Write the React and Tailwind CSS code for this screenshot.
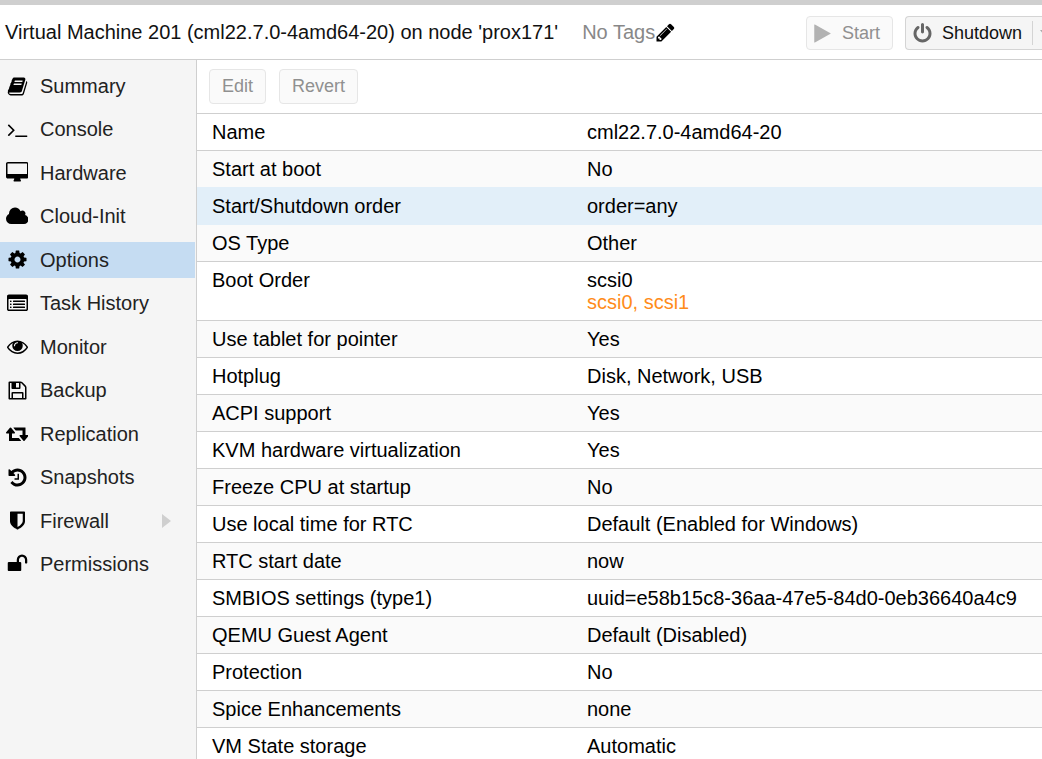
// ============================================================
// Virtual machine view: header, side navigation and options grid
// ============================================================

import { useState } from "react";

// Icon outlines, drawn on a 1792 unit grid. Each has its own x origin and width.
const ICONS = {
  book: {
    d: "M1703 478q40 57 18 129l-275 906q-19 64-76.5 107.5t-122.5 43.5h-923q-77 0-148.5-53.5t-99.5-131.5q-24-67-2-127 0-4 3-27t4-37q1-8-3-21.5t-3-19.5q2-11 8-21t16.5-23.5 16.5-23.5q23-38 45-91.5t30-91.5q3-10 .5-30t-.5-28q3-11 17-28t17-23q21-36 42-92t25-90q1-9-2.5-32t.5-28q4-13 22-30.5t22-22.5q19-26 42.5-84.5t27.5-96.5q1-8-3-25.5t-2-26.5q2-8 9-18t18-23 17-21q8-12 16.5-30.5t15-35 16-36 19.5-32 26.5-23.5 36-11.5 47.5 5.5l-1 3q38-9 51-9h761q74 0 114 56t18 130l-274 906q-36 119-71.5 153.5t-128.5 34.5h-869q-27 0-38 15-11 16-1 43 24 70 144 70h923q29 0 56-15.5t35-41.5l300-987q7-22 5-57 38 15 59 43zm-1064 2q-4 13 2 22.5t20 9.5h608q13 0 25.5-9.5t16.5-22.5l21-64q4-13-2-22.5t-20-9.5h-608q-13 0-25.5 9.5t-16.5 22.5zm-83 256q-4 13 2 22.5t20 9.5h608q13 0 25.5-9.5t16.5-22.5l21-64q4-13-2-22.5t-20-9.5h-608q-13 0-25.5 9.5t-16.5 22.5z",
  },
  terminal: {
    d: "M649 983l-466 466q-10 10-23 10t-23-10l-50-50q-10-10-10-23t10-23l393-393-393-393q-10-10-10-23t10-23l50-50q10-10 23-10t23 10l466 466q10 10 10 23t-10 23zm1079 457v64q0 14-9 23t-23 9h-960q-14 0-23-9t-9-23v-64q0-14 9-23t23-9h960q14 0 23 9t9 23z",
  },
  desktop: {
    x: -64,
    w: 1920,
    d: "M1728 992v-832q0-13-9.5-22.5t-22.5-9.5h-1600q-13 0-22.5 9.5t-9.5 22.5v832q0 13 9.5 22.5t22.5 9.5h1600q13 0 22.5-9.5t9.5-22.5zm128-832v1088q0 66-47 113t-113 47h-544q0 37 16 77.5t32 71 16 43.5q0 26-19 45t-45 19h-512q-26 0-45-19t-19-45q0-14 16-44t32-70 16-78h-544q-66 0-113-47t-47-113v-1088q0-66 47-113t113-47h1600q66 0 113 47t47 113z",
  },
  cloud: {
    x: 64,
    w: 1920,
    d: "M1984 1152q0 159-112.5 271.5t-271.5 112.5h-1088q-185 0-316.5-131.5t-131.5-316.5q0-132 71-241.5t187-163.5q-2-28-2-43 0-212 150-362t362-150q158 0 286.5 88t187.5 230q70-62 166-62 106 0 181 75t75 181q0 75-41 138 129 30 213 134.5t84 239.5z",
  },
  cog: {
    d: "M1152 896q0-106-75-181t-181-75-181 75-75 181 75 181 181 75 181-75 75-181zm512-109v222q0 12-8 23t-20 13l-185 28q-19 54-39 91 35 50 107 138 10 12 10 25t-9 23q-27 37-99 108t-94 71q-12 0-26-9l-138-108q-44 23-91 38-16 136-29 186-7 28-36 28h-222q-14 0-24.5-8.5t-11.5-21.5l-28-184q-49-16-90-37l-141 107q-10 9-25 9-14 0-25-11-126-114-165-168-7-10-7-23 0-12 8-23 15-21 51-66.5t54-70.5q-27-50-41-99l-183-27q-13-2-21-12.5t-8-23.5v-222q0-12 8-23t19-13l186-28q14-46 39-92-40-57-107-138-10-12-10-24 0-10 9-23 26-36 98.5-107.5t94.5-71.5q13 0 26 10l138 107q44-23 91-38 16-136 29-186 7-28 36-28h222q14 0 24.5 8.5t11.5 21.5l28 184q49 16 90 37l142-107q9-9 24-9 13 0 25 10 129 119 165 170 7 8 7 22 0 12-8 23-15 21-51 66.5t-54 70.5q26 50 41 98l183 28q13 2 21 12.5t8 23.5z",
  },
  list: {
    d: "M160 128h1472q66 0 113 47t47 113v1088q0 66-47 113t-113 47h-1472q-66 0-113-47t-47-113v-1088q0-66 47-113t113-47zM160 512q-32 0-32 32v832q0 32 32 32h1472q32 0 32-32v-832q0-32-32-32zM288 640h64q32 0 32 32v64q0 32-32 32h-64q-32 0-32-32v-64q0-32 32-32zM288 896h64q32 0 32 32v64q0 32-32 32h-64q-32 0-32-32v-64q0-32 32-32zM288 1152h64q32 0 32 32v64q0 32-32 32h-64q-32 0-32-32v-64q0-32 32-32zM544 640h960q32 0 32 32v64q0 32-32 32h-960q-32 0-32-32v-64q0-32 32-32zM544 896h960q32 0 32 32v64q0 32-32 32h-960q-32 0-32-32v-64q0-32 32-32zM544 1152h960q32 0 32 32v64q0 32-32 32h-960q-32 0-32-32v-64q0-32 32-32z",
  },
  eye: {
    d: "M1664 960q-152-236-381-353 61 104 61 225 0 185-131.5 316.5t-316.5 131.5-316.5-131.5-131.5-316.5q0-121 61-225-229 117-381 353 133 205 333.5 326.5t434.5 121.5 434.5-121.5 333.5-326.5zm-720-384q0-20-14-34t-34-14q-125 0-214.5 89.5t-89.5 214.5q0 20 14 34t34 14 34-14 14-34q0-86 61-147t147-61q20 0 34-14t14-34zm848 384q0 34-20 69-140 230-376.5 368.5t-499.5 138.5-499.5-139-376.5-368q-20-35-20-69t20-69q140-229 376.5-368t499.5-139 499.5 139 376.5 368q20 35 20 69z",
  },
  floppy: {
    d: "M512 1536h768v-384h-768v384zm896 0h128v-896q0-14-10-38.5t-20-34.5l-281-281q-10-10-34-20t-39-10v416q0 40-28 68t-68 28h-576q-40 0-68-28t-28-68v-416h-128v1280h128v-416q0-40 28-68t68-28h832q40 0 68 28t28 68v416zm-384-928v-320q0-13-9.5-22.5t-22.5-9.5h-192q-13 0-22.5 9.5t-9.5 22.5v320q0 13 9.5 22.5t22.5 9.5h192q13 0 22.5-9.5t9.5-22.5zm640 32v928q0 40-28 68t-68 28h-1344q-40 0-68-28t-28-68v-1344q0-40 28-68t68-28h928q40 0 88 20t76 48l280 280q28 28 48 76t20 88z",
  },
  retweet: {
    x: -64,
    w: 1920,
    d: "M1216 1504q0 13-9.5 22.5t-22.5 9.5h-960q-8 0-13.5-2t-9-7-5.5-8-3-11.5-1-11.5v-600h-192q-26 0-45-19t-19-45q0-24 15-41l320-384q19-22 49-22t49 22l320 384q15 17 15 41 0 26-19 45t-45 19h-192v384h576q16 0 25 11l160 192q7 10 7 21zm640-416q0 24-15 41l-320 384q-20 23-49 23t-49-23l-320-384q-15-17-15-41 0-26 19-45t45-19h192v-384h-576q-16 0-25-12l-160-192q-7-9-7-20 0-13 9.5-22.5t22.5-9.5h960q8 0 13.5 2t9 7 5.5 8 3 11.5 1 11.5v600h192q26 0 45 19t19 45z",
  },
  history: {
    d: "M1664 896q0 156-61 298t-164 245-245 164-298 61q-172 0-327-72.5t-264-204.5q-7-10-6.5-22.5t8.5-20.5l137-138q10-9 25-9 16 2 23 12 73 95 179 147t225 52q104 0 198.5-40.5t163.5-109.5 109.5-163.5 40.5-198.5-40.5-198.5-109.5-163.5-163.5-109.5-198.5-40.5q-98 0-188 35.5t-160 101.5l137 138q31 30 14 69-17 40-59 40h-448q-26 0-45-19t-19-45v-448q0-42 40-59 39-17 69 14l130 129q107-101 244.5-156.5t284.5-55.5q156 0 298 61t245 164 164 245 61 298zm-640-288v448q0 14-9 23t-23 9h-320q-14 0-23-9t-9-23v-64q0-14 9-23t23-9h224v-352q0-14 9-23t23-9h64q14 0 23 9t9 23z",
  },
  shield: {
    x: 64,
    d: "M1408 960v-640h-448v1137q119-63 213-137 235-184 235-360zm192-768v768q0 86-33.5 170.5t-83 150-118 127.5-126.5 103-121 77.5-89.5 49.5-42.5 20q-12 6-26 6t-26-6q-16-7-42.5-20t-89.5-49.5-121-77.5-126.5-103-118-127.5-83-150-33.5-170.5v-768q0-26 19-45t45-19h1152q26 0 45 19t19 45z",
  },
  unlock: {
    d: "M1728 576v256q0 26-19 45t-45 19h-64q-26 0-45-19t-19-45v-256q0-106-75-181t-181-75-181 75-75 181v192h96q40 0 68 28t28 68v576q0 40-28 68t-68 28h-960q-40 0-68-28t-28-68v-576q0-40 28-68t68-28h672v-192q0-185 131.5-316.5t316.5-131.5 316.5 131.5 131.5 316.5z",
  },
  power: {
    d: "M1664 896q0 156-61 298t-164 245-245 164-298 61-298-61-245-164-164-245-61-298q0-182 80.5-343t226.5-270q43-32 95.5-25t83.5 50q32 42 24.5 94.5t-49.5 84.5q-98 74-151.5 181t-53.5 228q0 104 40.5 198.5t109.5 163.5 163.5 109.5 198.5 40.5 198.5-40.5 163.5-109.5 109.5-163.5 40.5-198.5q0-121-53.5-228t-151.5-181q-42-32-49.5-84.5t24.5-94.5q31-43 84-50t95 25q146 109 226.5 270t80.5 343zm-640-768v640q0 52-38 90t-90 38-90-38-38-90v-640q0-52 38-90t90-38 90 38 38 90z",
  },
  play: {
    d: "M1576 927l-1328 738q-23 13-39.5 3t-16.5-36v-1472q0-26 16.5-36t39.5 3l1328 738q23 13 23 31t-23 31z",
  },
  pencil: {
    d: "M491 1536l91-91-235-235-91 91v107h128v128h107zm523-928q0-22-22-22-10 0-17 7l-542 542q-7 7-7 17 0 22 22 22 10 0 17-7l542-542q7-7 7-17zm-54-192l416 416-832 832h-416v-416zm683 96q0 53-37 90l-166 166-416-416 166-165q36-38 90-38 53 0 91 38l235 234q37 39 37 91z",
  },
};

const NAV = [
  ["Summary", "book"],
  ["Console", "terminal"],
  ["Hardware", "desktop"],
  ["Cloud-Init", "cloud"],
  ["Options", "cog"],
  ["Task History", "list"],
  ["Monitor", "eye"],
  ["Backup", "floppy"],
  ["Replication", "retweet"],
  ["Snapshots", "history"],
  ["Firewall", "shield"],
  ["Permissions", "unlock"],
];

const OPTIONS = [
  { name: "Name", value: "cml22.7.0-4amd64-20" },
  { name: "Start at boot", value: "No" },
  { name: "Start/Shutdown order", value: "order=any" },
  { name: "OS Type", value: "Other" },
  { name: "Boot Order", value: "scsi0", pending: "scsi0, scsi1" },
  { name: "Use tablet for pointer", value: "Yes" },
  { name: "Hotplug", value: "Disk, Network, USB" },
  { name: "ACPI support", value: "Yes" },
  { name: "KVM hardware virtualization", value: "Yes" },
  { name: "Freeze CPU at startup", value: "No" },
  { name: "Use local time for RTC", value: "Default (Enabled for Windows)" },
  { name: "RTC start date", value: "now" },
  { name: "SMBIOS settings (type1)", value: "uuid=e58b15c8-36aa-47e5-84d0-0eb36640a4c9" },
  { name: "QEMU Guest Agent", value: "Default (Disabled)" },
  { name: "Protection", value: "No" },
  { name: "Spice Enhancements", value: "none" },
  { name: "VM State storage", value: "Automatic" },
];

function Icon({ name, className }) {
  const { x = 0, w = 1792, d } = ICONS[name];
  return (
    <svg viewBox={`${x} 0 ${w} 1792`} fill="currentColor" fillRule="evenodd" aria-hidden="true" className={className}>
      <path d={d} />
    </svg>
  );
}

function Header() {
  return (
    <header className="flex h-[55px] items-center overflow-hidden border-b border-[#cfcfcf] bg-white pl-[5px]">
      <h1 className="shrink-0 whitespace-nowrap text-[20px] leading-[22px] text-[#111]">
        Virtual Machine 201 (cml22.7.0-4amd64-20) on node 'prox171'
      </h1>
      <div className="ml-6 flex shrink-0 items-center text-[20px] leading-[22px] text-[#888]">
        No Tags
        <button type="button" aria-label="Edit tags" className="text-black">
          <Icon name="pencil" className="h-[21px] w-[21px]" />
        </button>
      </div>
      <div className="mb-[9px] ml-auto flex shrink-0 gap-3 self-end">
        <button
          type="button"
          disabled
          className="flex h-[34px] items-center gap-[9px] rounded-[4px] border border-[#e6e6e6] bg-[#fafafa] pl-[5px] pr-3 text-[18px] text-[#909090]"
        >
          <Icon name="play" className="h-[21px] w-[21px] text-[#b2b2b2]" />
          Start
        </button>
        <div className="flex h-[34px] items-center rounded-l-[4px] border border-r-0 border-[#d4d4d4] bg-[#f5f5f5]">
          <button type="button" className="flex items-center gap-[9px] pl-[6px] pr-2.5 text-[18px] text-[#111]">
            <Icon name="power" className="h-[21px] w-[21px] text-[#666]" />
            Shutdown
          </button>
          <button
            type="button"
            aria-label="More power actions"
            className="flex h-6 w-[10px] items-center overflow-hidden border-l border-[#d4d4d4] pl-[7px]"
          >
            <svg viewBox="0 0 10 6" className="h-1.5 w-2.5 shrink-0 text-[#aaa]" fill="currentColor" aria-hidden="true">
              <path d="M0 0h10L5 6z" />
            </svg>
          </button>
        </div>
      </div>
    </header>
  );
}

function SideNav({ active, onSelect }) {
  return (
    <nav className="w-[197px] shrink-0 border-r border-[#cfcfcf] bg-[#f5f5f5] pr-px pt-2">
      <ul className="flex h-[514px] flex-col justify-between">
        {NAV.map(([label, icon]) => (
          <li key={label}>
            <a
              href="#"
              onClick={(e) => {
                e.preventDefault();
                onSelect(label);
              }}
              className={`flex h-9 items-center gap-[11px] pl-[5px] text-[20px] leading-[22px] text-[#222] ${
                active === label ? "bg-[#c5dcf2]" : ""
              }`}
            >
              <span className="flex w-6 justify-center text-black">
                <Icon name={icon} className="h-[21px] w-auto" />
              </span>
              {label}
              {label === "Firewall" && (
                <svg viewBox="0 0 9 14" className="ml-auto mr-6 h-3.5 w-[9px] text-[#cfcfcf]" fill="currentColor" aria-hidden="true">
                  <path d="M0 0l9 7-9 7z" />
                </svg>
              )}
            </a>
          </li>
        ))}
      </ul>
    </nav>
  );
}

function OptionsGrid() {
  const [selected, setSelected] = useState(2);

  // The selected row's colour also covers the lines above and below it
  const look = (i) => {
    if (i === selected) return "bg-[#e2eff9] border-[#e2eff9]";
    const line = i === selected - 1 ? "border-[#e2eff9]" : "border-[#cfcfcf]";
    return i % 2 ? `bg-[#fafafa] ${line}` : `bg-white ${line}`;
  };

  return (
    <table className="w-full table-fixed border-separate border-spacing-0 text-left text-[20px] leading-[22px] text-black">
      <colgroup>
        <col className="w-[375px]" />
        <col />
      </colgroup>
      <tbody>
        {OPTIONS.map((row, i) => (
          <tr key={row.name} onClick={() => setSelected(i)}>
            <th scope="row" className={`border-b py-[7px] pl-[15px] align-top font-normal ${look(i)}`}>
              {row.name}
            </th>
            <td className={`whitespace-nowrap border-b py-[7px] pl-[15px] align-top ${look(i)}`}>
              {row.value}
              {row.pending && <div className="text-[#ff8c1a]">{row.pending}</div>}
            </td>
          </tr>
        ))}
      </tbody>
    </table>
  );
}

export default function App() {
  const [active, setActive] = useState("Options");

  return (
    <div className="flex h-screen flex-col overflow-hidden border-t-[5px] border-[#cfcfcf] bg-white font-['Liberation_Sans',Arial,sans-serif]">
      <Header />
      <div className="flex min-h-0 flex-1">
        <SideNav active={active} onSelect={setActive} />
        <main className="min-w-0 flex-1 overflow-hidden">
          <div className="flex gap-[13px] border-b border-[#cfcfcf] px-3 py-[9px]">
            {["Edit", "Revert"].map((label) => (
              <button
                key={label}
                type="button"
                disabled
                className="h-[35px] rounded-[4px] border border-[#e6e6e6] bg-[#fafafa] px-3 text-[18px] text-[#909090]"
              >
                {label}
              </button>
            ))}
          </div>
          <OptionsGrid />
        </main>
      </div>
    </div>
  );
}
